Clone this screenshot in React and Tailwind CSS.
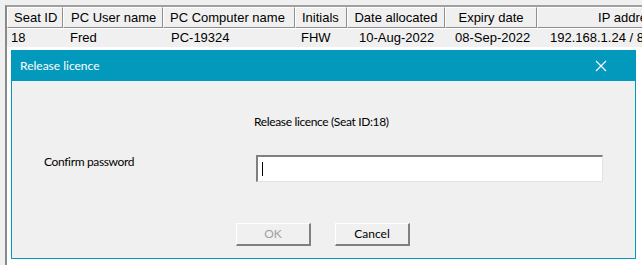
import React from 'react';

const columns = [
  { label: 'Seat ID', w: 'w-[56px]', align: 'text-left pl-[6px]' },
  { label: 'PC User name', w: 'w-[100px]', align: 'text-left pl-[7px]' },
  { label: 'PC Computer name', w: 'w-[132px]', align: 'text-left pl-[6px]' },
  { label: 'Initials', w: 'w-[52px]', align: 'text-left pl-[6px]' },
  { label: 'Date allocated', w: 'w-[98px]', align: 'text-center' },
  { label: 'Expiry date', w: 'w-[92px]', align: 'text-center' },
  { label: 'IP address', w: 'w-[184px]', align: 'text-center' },
];

const row = [
  { value: '18', cls: 'pl-[4px]' },
  { value: 'Fred', cls: 'pl-[7px]' },
  { value: 'PC-19324', cls: 'pl-[8px]' },
  { value: 'FHW', cls: 'pl-[6px]' },
  { value: '10-Aug-2022', cls: 'pl-[12px]' },
  { value: '08-Sep-2022', cls: 'pl-[10px]' },
  { value: '192.168.1.24 / 8080', cls: 'pl-[13px]' },
];

const App = () => {
  return (
    <div className="relative w-[642px] h-[265px] overflow-hidden bg-[#f0f0f0] font-['Liberation_Sans',Arial,sans-serif]">
      {/* Grid */}
      <div className="absolute left-[5px] top-[5px] w-[720px] h-[270px] border-l-2 border-t-2 border-l-[#8a8a8a] border-t-[#a0a0a0] bg-white">
        <div className="flex h-[21px]">
          {columns.map((c) => (
            <div
              key={c.label}
              className={`${c.w} shrink-0 h-full bg-[#f0f0f0] border-t border-l border-t-white border-l-white border-r border-b border-r-[#8e8e8e] border-b-[#8e8e8e] text-[13px] leading-[19px] text-black whitespace-nowrap overflow-hidden ${c.align}`}
            >
              {c.label}
            </div>
          ))}
        </div>
        <div className="flex h-[18px] mt-[1px] bg-[#f0f0f0]">
          {row.map((r, i) => (
            <div
              key={i}
              className={`${columns[i].w} shrink-0 text-[13px] leading-[18px] text-black whitespace-nowrap overflow-hidden ${r.cls}`}
            >
              {r.value}
            </div>
          ))}
        </div>
      </div>

      {/* Dialog */}
      <div className="absolute left-[11px] top-[50px] w-[625px] h-[209px] border border-[#0299bc] bg-[#f0f0f0] flex flex-col font-['Lato',sans-serif] text-[12px] text-black">
        <div className="h-[30px] shrink-0 bg-[#0299bc] flex items-center justify-between pl-[8px] pr-[28px]">
          <span className="text-white text-[12px] leading-none">Release licence</span>
          <svg width="12" height="12" viewBox="0 0 12 12" className="block">
            <path d="M1 1 L11 11 M11 1 L1 11" stroke="white" strokeWidth="1.2" fill="none" />
          </svg>
        </div>
        <div className="pt-[33px] pl-[242px] leading-[16px] tracking-[-0.35px]">Release licence (Seat ID:18)</div>
        <div className="flex mt-[23px] pl-[32px]">
          <div className="w-[212px] leading-[16px] pt-[1px] tracking-[-0.35px]">Confirm password</div>
          <div className="mt-[2px] w-[347px] h-[27px] bg-white border-t-2 border-l-2 border-t-[#808080] border-l-[#808080] border-r border-b border-r-[#e3e3e3] border-b-[#e3e3e3] flex items-center pl-[4px]">
            <div className="w-px h-[14px] bg-black" />
          </div>
        </div>
        <div className="flex mt-[41px] pl-[224px] gap-[24px]">
          <div className="w-[75px] h-[23px] bg-[#f0f0f0] border-t border-l border-t-white border-l-white border-r-2 border-b-2 border-r-[#808080] border-b-[#808080] flex items-center justify-center text-[#a0a0a0]">
            OK
          </div>
          <div className="w-[75px] h-[23px] bg-[#f0f0f0] border-t border-l border-t-white border-l-white border-r-2 border-b-2 border-r-[#808080] border-b-[#808080] flex items-center justify-center text-black">
            Cancel
          </div>
        </div>
      </div>
    </div>
  );
};

export default App;
